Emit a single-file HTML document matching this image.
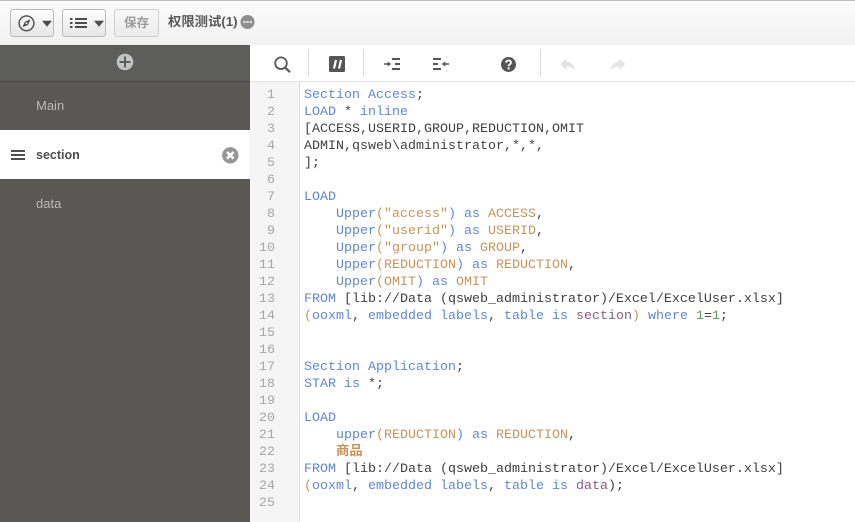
<!DOCTYPE html>
<html>
<head>
<meta charset="utf-8">
<style>
html,body{margin:0;padding:0;width:855px;height:522px;overflow:hidden;background:#fff;font-family:"Liberation Sans","Noto Sans CJK SC",sans-serif}
.abs,.abs *{box-sizing:border-box}
.abs{position:absolute}
#top{left:0;top:0;width:855px;height:45px;background:linear-gradient(#fbfbfb,#f1f1f1);border-top:1px solid #bdbdbd}
.btn{position:absolute;top:8px;height:28px;border:1px solid #b8b8b8;border-radius:3px;background:linear-gradient(#fdfdfd,#e6e6e6)}
#side{left:0;top:45px;width:250px;height:477px;background:#595855}
#add{left:0;top:45px;width:250px;height:37px;background:#5d5d5b;border-bottom:1px solid #484745}
.tab{position:absolute;left:36px;font-size:13px;color:#b9b9b6;line-height:16px}
#sel{left:0;top:130px;width:250px;height:49px;background:#fff}
#tb{left:250px;top:45px;width:605px;height:37px;background:#fff;border-bottom:1px solid #e4e4e4}
.sep{position:absolute;top:4px;width:1px;height:28px;background:#d9d9d9}
#gut{left:250px;top:83px;width:50px;height:439px;background:#f5f5f5;border-right:1px solid #dddddd}
#gutb{left:250px;top:82px;width:50px;height:1px;background:#f5f5f5;border-right:1px solid #dddddd}
.n{position:absolute;left:0;width:25px;text-align:right;font:13.33px/17px "Liberation Mono",monospace;color:#a6a6a6}
#code{left:304px;top:87px;font:13.33px/17px "Liberation Mono","Noto Sans CJK SC",monospace;color:#404040;white-space:pre;margin:0}
.k{color:#5f86d6}.o{color:#c8935a}.p{color:#8a5a86}.g{color:#5f9a5f}
.z{font-weight:bold;color:#c8935a}
</style>
</head>
<body>
<div class="abs" id="top">
  <div class="btn" style="left:10px;width:44px">
    <svg width="42" height="26" style="position:absolute;left:0;top:0"><circle cx="15.5" cy="13.3" r="7.4" fill="none" stroke="#4c4c4c" stroke-width="1.4"/><path d="M19.5 9.3L17.1 14.9L11.5 17.3L13.9 11.7Z" fill="#4c4c4c"/><circle cx="15.5" cy="13.3" r="1" fill="#eee"/><path d="M31 10.7L36 16.7L41 10.7Z" fill="#4c4c4c"/></svg>
  </div>
  <div class="btn" style="left:62px;width:44px">
    <svg width="42" height="26" style="position:absolute;left:0;top:0"><path d="M7 8h2.5v2H7zM7 12h2.5v2H7zM7 16h2.5v2H7zM12 8h12v2H12zM12 12h12v2H12zM12 16h12v2H12z" fill="#4c4c4c"/><path d="M31 10.7L36 16.7L41 10.7Z" fill="#4c4c4c"/></svg>
  </div>
  <div class="btn" style="left:114px;width:45px;border-color:#cfcfcf;background:linear-gradient(#f8f8f8,#ececec);color:#9c9c9c;font-size:12.5px;font-weight:bold;text-align:center;line-height:26px">保存</div>
  <div class="abs" style="left:168px;top:12px;font-size:13.33px;font-weight:bold;color:#595959;line-height:18px;white-space:nowrap">权限测试(1)</div>
  <svg class="abs" style="left:240px;top:13px" width="16" height="16"><circle cx="7.5" cy="8" r="7" fill="#8f8f8f"/><path d="M3 7h2.4v2H3zM6.3 7h2.4v2H6.3zM9.6 7H12v2H9.6z" fill="#ddd"/></svg>
</div>

<div class="abs" id="side"></div>
<div class="abs" id="add">
  <svg class="abs" style="left:116px;top:8px" width="18" height="18"><circle cx="9" cy="9" r="8.3" fill="#c2c4c7"/><path d="M8 3.5h2v11H8zM3.5 8h11v2h-11z" fill="#5d5d5b"/></svg>
</div>
<div class="tab" style="top:98px">Main</div>
<div class="abs" id="sel">
  <svg class="abs" style="left:11px;top:20px" width="15" height="11"><path d="M0 0h14v2H0zM0 4h14v2H0zM0 8h14v2H0z" fill="#4f4f4f"/></svg>
  <div class="abs" style="left:36px;top:17px;font-size:12.5px;font-weight:bold;color:#4d4d4d;line-height:16px">section</div>
  <svg class="abs" style="left:222px;top:17px" width="17" height="17"><circle cx="8.3" cy="8.3" r="8.2" fill="#969696"/><path d="M5 5L11.6 11.6M11.6 5L5 11.6" stroke="#fff" stroke-width="2.6"/></svg>
</div>
<div class="tab" style="top:196px">data</div>

<div class="abs" id="tb">
  <svg class="abs" style="left:22px;top:10px" width="20" height="20"><circle cx="9" cy="8.2" r="5.8" fill="none" stroke="#595959" stroke-width="1.8"/><path d="M13 12.4L18 17.2" stroke="#595959" stroke-width="2.2"/></svg>
  <div class="sep" style="left:58px"></div>
  <svg class="abs" style="left:79px;top:11px" width="16" height="17"><rect width="16" height="16" y="0" rx="1.5" fill="#555"/><path d="M7 4L5 12.5M12 4L10 12.5" stroke="#fff" stroke-width="2.2"/></svg>
  <div class="sep" style="left:113px"></div>
  <svg class="abs" style="left:134px;top:12px" width="17" height="15"><path d="M8 1h8v2H8zM11 6h5v2h-5zM8 11h8v2H8zM0 6.2h3.6V4.5L7.2 7L3.6 9.5V7.8H0z" fill="#555"/></svg>
  <svg class="abs" style="left:183px;top:12px" width="17" height="15"><path d="M0 1h8v2H0zM0 6h5v2H0zM0 11h8v2H0zM16 6.2h-3.6V4.5L8.8 7L12.4 9.5V7.8H16z" fill="#555"/></svg>
  <svg class="abs" style="left:251px;top:12px" width="15" height="15"><circle cx="7.5" cy="7.5" r="7.5" fill="#555"/><path d="M5 5.8C5 2.8 10 2.8 10 5.6C10 7.4 7.6 7.4 7.6 9.2" fill="none" stroke="#fff" stroke-width="1.8"/><rect x="6.6" y="10.4" width="2" height="2" fill="#fff"/></svg>
  <div class="sep" style="left:290px"></div>
  <svg class="abs" style="left:310px;top:13px" width="16" height="15"><path d="M0 6L6.5 0.5V4C11.5 4 14.5 7 14.5 12.5C13 10 11 8.5 6.5 8.5V12Z" fill="#e3e3e3"/></svg>
  <svg class="abs" style="left:361px;top:13px" width="16" height="15"><path d="M14.5 6L8 0.5V4C3 4 0 7 0 12.5C1.5 10 3.5 8.5 8 8.5V12Z" fill="#e3e3e3"/></svg>
</div>

<div class="abs" id="gutb"></div>
<div class="abs" id="gut">
  <div class="n" style="top:4px">1</div><div class="n" style="top:21px">2</div><div class="n" style="top:38px">3</div><div class="n" style="top:55px">4</div><div class="n" style="top:72px">5</div><div class="n" style="top:89px">6</div><div class="n" style="top:106px">7</div><div class="n" style="top:123px">8</div><div class="n" style="top:140px">9</div><div class="n" style="top:157px">10</div><div class="n" style="top:174px">11</div><div class="n" style="top:191px">12</div><div class="n" style="top:208px">13</div><div class="n" style="top:225px">14</div><div class="n" style="top:242px">15</div><div class="n" style="top:259px">16</div><div class="n" style="top:276px">17</div><div class="n" style="top:293px">18</div><div class="n" style="top:310px">19</div><div class="n" style="top:327px">20</div><div class="n" style="top:344px">21</div><div class="n" style="top:361px">22</div><div class="n" style="top:378px">23</div><div class="n" style="top:395px">24</div><div class="n" style="top:412px">25</div>
</div>

<pre class="abs" id="code"><span class="k">Section Access</span>;
<span class="k">LOAD</span> * <span class="k">inline</span>
[ACCESS,USERID,GROUP,REDUCTION,OMIT
ADMIN,qsweb\administrator,*,*,
];

<span class="k">LOAD</span>
    <span class="k">Upper</span><span class="o">(</span><span class="o">"access"</span><span class="k">)</span> <span class="k">as</span> <span class="o">ACCESS</span>,
    <span class="k">Upper</span><span class="o">(</span><span class="o">"userid"</span><span class="k">)</span> <span class="k">as</span> <span class="o">USERID</span>,
    <span class="k">Upper</span><span class="o">(</span><span class="o">"group"</span><span class="k">)</span> <span class="k">as</span> <span class="o">GROUP</span>,
    <span class="k">Upper</span><span class="o">(REDUCTION</span><span class="k">)</span> <span class="k">as</span> <span class="o">REDUCTION</span>,
    <span class="k">Upper</span><span class="o">(OMIT</span><span class="k">)</span> <span class="k">as</span> <span class="o">OMIT</span>
<span class="k">FROM</span> [lib://Data (qsweb_administrator)/Excel/ExcelUser.xlsx]
<span class="o">(</span><span class="k">ooxml</span>, <span class="k">embedded labels</span>, <span class="k">table is</span> <span class="p">section</span><span class="o">)</span> <span class="k">where</span> <span class="g">1</span>=<span class="g">1</span>;


<span class="k">Section Application</span>;
<span class="k">STAR is</span> *;

<span class="k">LOAD</span>
    <span class="k">upper</span><span class="o">(REDUCTION</span><span class="k">)</span> <span class="k">as</span> <span class="o">REDUCTION</span>,
    <span class="z">商品</span>
<span class="k">FROM</span> [lib://Data (qsweb_administrator)/Excel/ExcelUser.xlsx]
<span class="o">(</span><span class="k">ooxml</span>, <span class="k">embedded labels</span>, <span class="k">table is</span> <span class="p">data</span>);
</pre>
</body>
</html>
